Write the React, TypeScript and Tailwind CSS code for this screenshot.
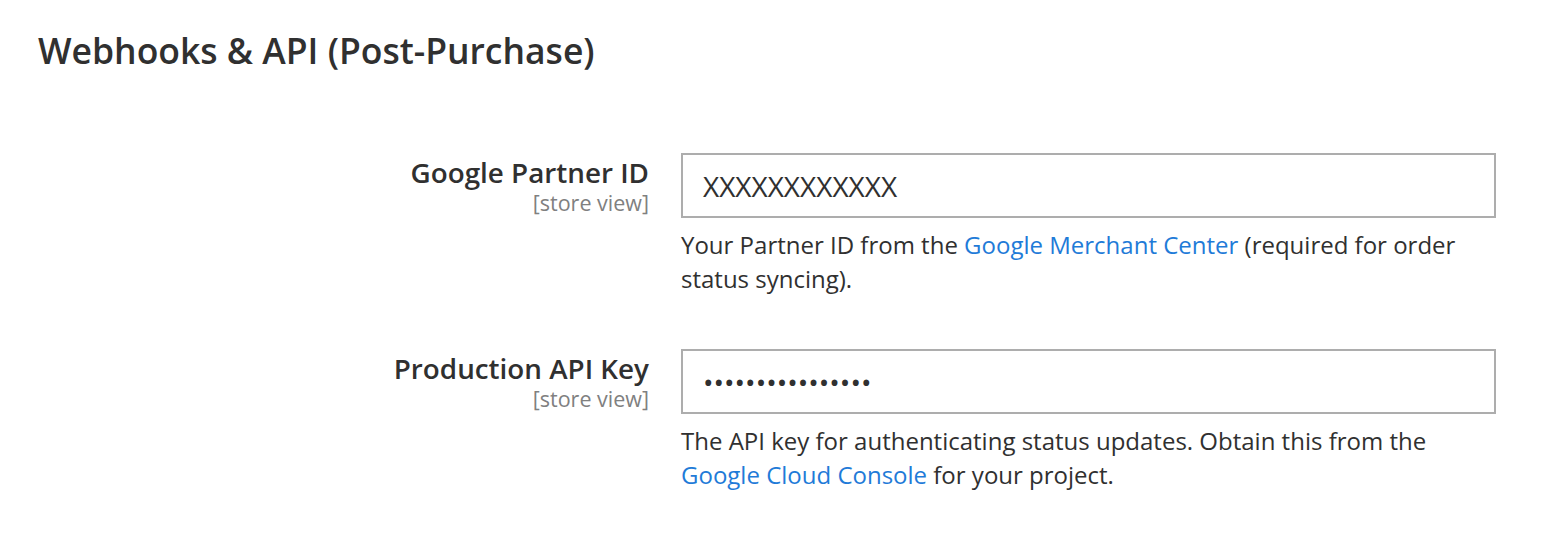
const fields = [
  {
    label: "Google Partner ID",
    value: "XXXXXXXXXXXX",
    help: (
      <>
        Your Partner ID from the{" "}
        <a href="#" className="text-[#1f7bd8]">
          Google Merchant Center
        </a>{" "}
        (required for order status syncing).
      </>
    ),
  },
  {
    label: "Production API Key",
    value: "••••••••••••••••",
    help: (
      <>
        The API key for authenticating status updates. Obtain this from the{" "}
        <a href="#" className="text-[#1f7bd8]">
          Google Cloud Console
        </a>{" "}
        for your project.
      </>
    ),
  },
];

export default function App() {
  return (
    <div
      className="min-h-[534px] bg-white text-[#303030]"
      style={{ fontFamily: "'Open Sans', 'Liberation Sans', sans-serif" }}
    >
      <div className="px-[38px] pt-[24px]">
        <h2 className="text-[35.5px] font-semibold leading-[52px]">
          Webhooks &amp; API (Post-Purchase)
        </h2>
      </div>
      <div className="mt-[77px] flex flex-col gap-[53px]">
        {fields.map((f) => (
          <div key={f.label} className="flex gap-[32px]">
            <div className="w-[649px] shrink-0 text-right pt-[1px]">
              <div className="text-[27.8px] font-semibold leading-[36px]">
                {f.label}
              </div>
              <div className="text-[21.5px] leading-[26px] text-[#808080]">
                [store view]
              </div>
            </div>
            <div className="w-[815px]">
              <div className="h-[65px] border-2 border-[#adadad] px-[20px] flex items-center text-[28px]">
                {f.value}
              </div>
              <p className="mt-[10px] text-[24px] leading-[34px]">{f.help}</p>
            </div>
          </div>
        ))}
      </div>
    </div>
  );
}
